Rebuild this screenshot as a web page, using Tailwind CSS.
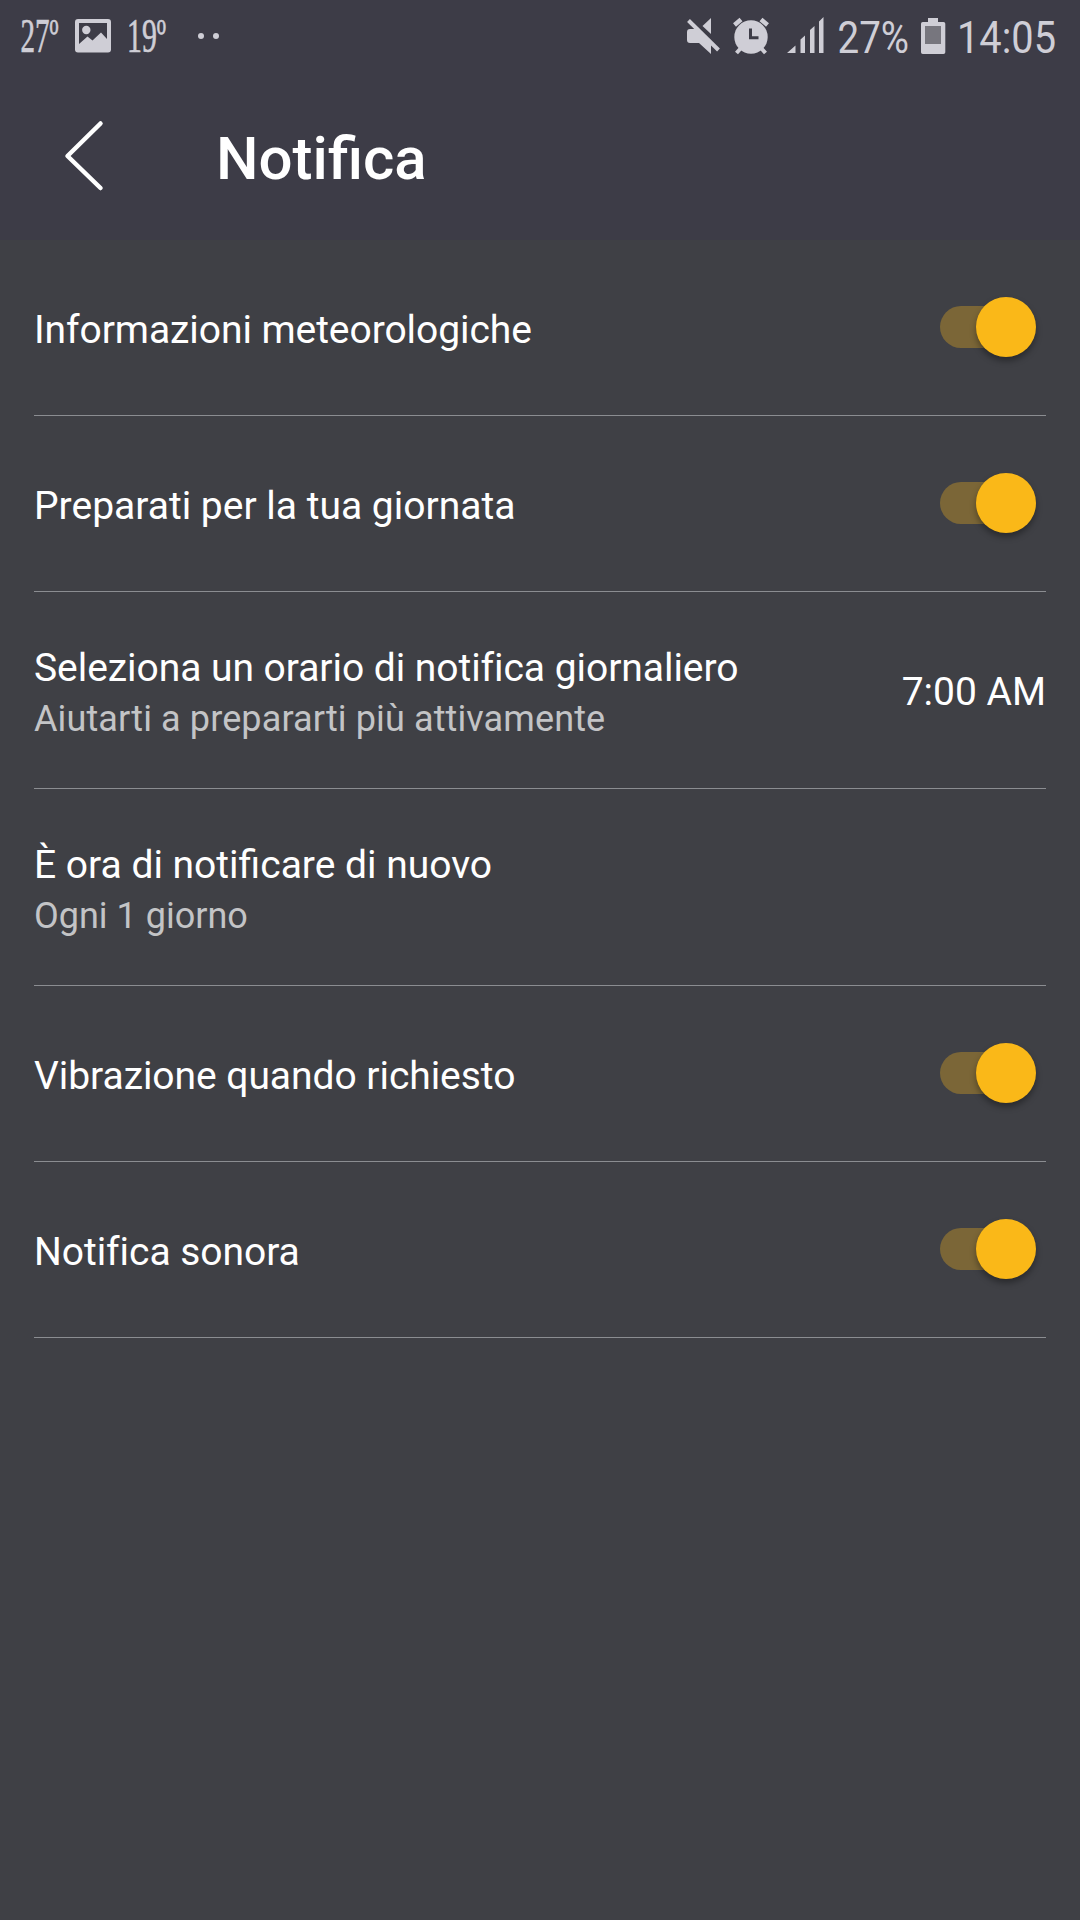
<!DOCTYPE html>
<html lang="it">
<head>
  <meta charset="UTF-8" />
  <meta name="viewport" content="width=device-width, initial-scale=1.0"/>
  <title>Notifica</title>
  <script src="https://cdn.jsdelivr.net/npm/@tailwindcss/browser@4"></script>
</head>
<body class="bg-[#3f4045] text-white font-['Roboto',sans-serif] min-h-screen">

  <header class="bg-[#3d3c47] h-[240px]">
    <!-- Status bar -->
    <div class="flex h-[72px] justify-between text-[#cfced6]">
      <div class="flex pl-5">
        <svg class="w-[40px] h-[72px] overflow-visible" viewBox="20 0 40 72" fill="currentColor" stroke="currentColor" stroke-width="0.7" font-family="Liberation Serif, serif">
          <text x="20.500" y="52" font-size="48" textLength="38" lengthAdjust="spacingAndGlyphs">27º</text>
        </svg>
        <svg class="ml-[15px] w-[36px] h-[72px]" viewBox="75 0 36 72" fill="currentColor">
          <path fill-rule="evenodd" d="M78 19h30a3 3 0 0 1 3 3v27.500a3 3 0 0 1-3 3H78a3 3 0 0 1-3-3V22a3 3 0 0 1 3-3zM79 23v21l8.500-7.500 5 4L101 32.500l6 6.500V23z"/>
          <circle cx="86.300" cy="30" r="4.200"/>
        </svg>
        <svg class="ml-[17px] w-[40px] h-[72px] overflow-visible" viewBox="128 0 40 72" fill="currentColor" stroke="currentColor" stroke-width="0.7" font-family="Liberation Serif, serif">
          <text x="127" y="52" font-size="48" textLength="39" lengthAdjust="spacingAndGlyphs">19º</text>
        </svg>
        <div class="flex items-center gap-[9px] ml-[29.500px]">
          <span class="size-[6px] rounded-full bg-current"></span>
          <span class="size-[6px] rounded-full bg-current"></span>
        </div>
      </div>

      <div class="flex pr-6">
        <!-- Muted -->
        <svg class="w-[36px] h-[72px]" viewBox="686 0 36 72" fill="currentColor">
          <path d="M711 18v16l-8.500-8zM690 29h6l15 14.500V54l-12-11h-9a3 3 0 0 1-3-3v-8a3 3 0 0 1 3-3z"/>
          <path d="M688.500 20.500 718.500 50" stroke="currentColor" stroke-width="4"/>
        </svg>
        <!-- Alarm -->
        <svg class="ml-[11px] w-[36px] h-[72px]" viewBox="733 0 36 72" fill="currentColor">
          <circle cx="751" cy="37" r="16.700"/>
          <path d="M734.500 25l6.500-5.500M767.500 25 761 19.500" stroke="currentColor" stroke-width="4.500"/>
          <path d="M741 48l-4.500 5M761 48l4.500 5" stroke="currentColor" stroke-width="4"/>
          <path d="M750.500 28.500v9.200h8" fill="none" stroke="#3d3c47" stroke-width="3"/>
        </svg>
        <!-- Signal -->
        <svg class="ml-[18px] w-[38px] h-[72px]" viewBox="787 0 38 72" fill="currentColor">
          <path d="M787 53l8.500-7.500V53zM800.500 39.500l4.500-4V53h-4.500zM810 30l4.500-4V53H810zM819 21.500l4.500-4.500v36H819z"/>
        </svg>
        <svg class="ml-[12px] w-[73px] h-[72px] overflow-visible" viewBox="837 0 73 72" fill="currentColor" font-family="Roboto, sans-serif">
          <text x="837.500" y="53" font-size="45" textLength="71.500" lengthAdjust="spacingAndGlyphs">27%</text>
        </svg>
        <!-- Battery -->
        <svg class="ml-[11px] w-[25px] h-[72px]" viewBox="921 0 25 72" fill="currentColor">
          <path d="M928 18h10v4h5.500a1.800 1.800 0 0 1 1.800 1.800v28.400a1.800 1.800 0 0 1-1.800 1.800h-20.700a1.800 1.800 0 0 1-1.800-1.800V23.800a1.800 1.800 0 0 1 1.800-1.800h5.200z"/>
          <path fill="#77767e" d="M925 26h16v18h-16z"/>
        </svg>
        <svg class="ml-[12px] w-[98px] h-[72px] overflow-visible" viewBox="958 0 98 72" fill="currentColor" font-family="Roboto, sans-serif">
          <text x="957" y="53" font-size="45" textLength="99" lengthAdjust="spacingAndGlyphs">14:05</text>
        </svg>
      </div>
    </div>

    <!-- Title bar -->
    <div class="flex items-center h-[168px] pl-[62px]">
      <button>
        <svg class="w-[44px] h-[168px]" viewBox="62 72 44 168" fill="none" stroke="#fff" stroke-width="4.500" stroke-linecap="round" stroke-linejoin="round">
          <path d="M100.500 123.500 67.500 156l33 32"/>
        </svg>
      </button>
      <h1 class="ml-[110px] pt-[5px] text-[60px] leading-[70px] font-medium">Notifica</h1>
    </div>
  </header>

  <main class="px-[34px]">
    <div class="flex items-center justify-between h-[176px] border-b border-[#8b8d91]">
      <span class="pt-[6px] text-[39px] tracking-[-0.070px]">Informazioni meteorologiche</span>
      <div class="flex items-center w-[96px] h-[60px] mr-[10.500px] mb-px relative">
        <div class="w-[76px] h-[42px] rounded-full bg-[#7b6637]"></div>
        <div class="absolute right-0 size-[60px] rounded-full bg-[#fab818] shadow-[0_4px_6px_rgba(0,0,0,0.35)]"></div>
      </div>
    </div>

    <div class="flex items-center justify-between h-[176px] border-b border-[#8b8d91]">
      <span class="pt-[6px] text-[39px]">Preparati per la tua giornata</span>
      <div class="flex items-center w-[96px] h-[60px] mr-[10.500px] mb-px relative">
        <div class="w-[76px] h-[42px] rounded-full bg-[#7b6637]"></div>
        <div class="absolute right-0 size-[60px] rounded-full bg-[#fab818] shadow-[0_4px_6px_rgba(0,0,0,0.35)]"></div>
      </div>
    </div>

    <div class="flex items-center justify-between h-[197px] pt-[4px] border-b border-[#8b8d91]">
      <div class="flex flex-col">
        <span class="text-[39px] leading-[53px] tracking-[-0.050px]">Seleziona un orario di notifica giornaliero</span>
        <span class="text-[36px] leading-[48px] tracking-[0.120px] text-[#c3c4c6]">Aiutarti a prepararti più attivamente</span>
      </div>
      <span class="text-[39px]">7:00 AM</span>
    </div>

    <div class="flex items-center h-[197px] pt-[4px] border-b border-[#8b8d91]">
      <div class="flex flex-col">
        <span class="text-[39px] leading-[53px]">È ora di notificare di nuovo</span>
        <span class="text-[36px] leading-[48px] text-[#c3c4c6]">Ogni 1 giorno</span>
      </div>
    </div>

    <div class="flex items-center justify-between h-[176px] border-b border-[#8b8d91]">
      <span class="pt-[6px] text-[39px] tracking-[-0.050px]">Vibrazione quando richiesto</span>
      <div class="flex items-center w-[96px] h-[60px] mr-[10.500px] mb-px relative">
        <div class="w-[76px] h-[42px] rounded-full bg-[#7b6637]"></div>
        <div class="absolute right-0 size-[60px] rounded-full bg-[#fab818] shadow-[0_4px_6px_rgba(0,0,0,0.35)]"></div>
      </div>
    </div>

    <div class="flex items-center justify-between h-[176px] border-b border-[#8b8d91]">
      <span class="pt-[6px] text-[39px] tracking-[-0.050px]">Notifica sonora</span>
      <div class="flex items-center w-[96px] h-[60px] mr-[10.500px] mb-px relative">
        <div class="w-[76px] h-[42px] rounded-full bg-[#7b6637]"></div>
        <div class="absolute right-0 size-[60px] rounded-full bg-[#fab818] shadow-[0_4px_6px_rgba(0,0,0,0.35)]"></div>
      </div>
    </div>
  </main>

</body>
</html>
